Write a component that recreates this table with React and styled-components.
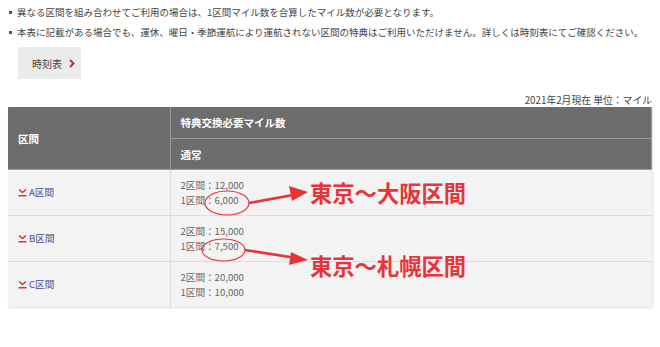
import styled, { createGlobalStyle } from "styled-components";

const GlobalStyle = createGlobalStyle`
  body {
    margin: 0;
    background: #fff;
    font-family: "Noto Sans CJK JP", "Noto Sans", sans-serif;
    color: #444;
  }
`;

const Page = styled.div`
  position: relative;
  width: 660px;
  height: 347px;
  padding: 0 8px;
  box-sizing: border-box;
`;

const Notes = styled.ul`
  list-style: none;
  margin: 2px 0 0;
  padding: 0;
`;

const Note = styled.li`
  position: relative;
  padding-left: 9px;
  font-size: 9.5px;
  line-height: 20px;
  color: #444;
  white-space: nowrap;
  &::before {
    content: "";
    position: absolute;
    left: 1px;
    top: 9px;
    width: 3px;
    height: 3px;
    background: #555;
  }
`;

const TimetableButton = styled.div`
  display: flex;
  align-items: center;
  gap: 7px;
  width: 63px;
  height: 32px;
  box-sizing: border-box;
  margin: 5px 0 0 10px;
  padding-left: 14px;
  background: #ebebeb;
  font-size: 10px;
  color: #444;
  svg {
    display: block;
    margin-top: 1px;
  }
`;

const Stamp = styled.div`
  margin-top: 14px;
  text-align: right;
  font-size: 9.8px;
  line-height: 14px;
  color: #444;
`;

const Table = styled.table`
  width: 644px;
  border-collapse: collapse;
  table-layout: fixed;
  box-shadow: 1px 1px 2px rgba(0, 0, 0, 0.12);
`;

const Head = styled.th`
  background: #6d6d6d;
  color: #fff;
  font-size: 10.5px;
  font-weight: 700;
  text-align: left;
  padding: 0 0 0 10px;
  height: ${(p) => p.$h}px;
  border: 1px solid #9a9a9a;
  border-top: none;
  &:first-child {
    border-left: none;
  }
`;

const Cell = styled.td`
  background: #f3f3f3;
  height: 45px;
  padding: 0 0 0 10px;
  border-top: 1px solid #dcdcdc;
  border-left: ${(p) => (p.$first ? "none" : "1px solid #dcdcdc")};
  font-size: 9.6px;
  line-height: 15px;
  color: #666;
  vertical-align: middle;
`;

const SectionLink = styled.span`
  display: flex;
  align-items: center;
  gap: 2px;
  color: #4a4a8c;
  font-size: 9.6px;
  svg {
    display: block;
  }
`;

const Label = styled.div`
  position: absolute;
  left: 310px;
  top: ${(p) => p.$top}px;
  font-size: 22.3px;
  line-height: 22px;
  font-weight: 700;
  color: #e8333a;
  white-space: nowrap;
  pointer-events: none;
`;

const Overlay = styled.svg`
  position: absolute;
  left: 0;
  top: 0;
  pointer-events: none;
`;

const rows = [
  { name: "A区間", two: "12,000", one: "6,000" },
  { name: "B区間", two: "15,000", one: "7,500" },
  { name: "C区間", two: "20,000", one: "10,000" },
];

function DownMark() {
  return (
    <svg width="9" height="9" viewBox="0 0 9 9">
      <path d="M1 1.5 L4.5 4.5 L8 1.5" fill="none" stroke="#d8323a" strokeWidth="1.6" />
      <rect x="0.5" y="7" width="8" height="1.5" fill="#d8323a" />
    </svg>
  );
}

function RightMark() {
  return (
    <svg width="6" height="9" viewBox="0 0 6 9">
      <path d="M1 1 L4.5 4.5 L1 8" fill="none" stroke="#c8283a" strokeWidth="2" />
    </svg>
  );
}

function App() {
  return (
    <Page>
      <GlobalStyle />
      <Notes>
        <Note>異なる区間を組み合わせてご利用の場合は、1区間マイル数を合算したマイル数が必要となります。</Note>
        <Note>本表に記載がある場合でも、運休、曜日・季節運航により運航されない区間の特典はご利用いただけません。詳しくは時刻表にてご確認ください。</Note>
      </Notes>
      <TimetableButton>
        時刻表
        <RightMark />
      </TimetableButton>
      <Stamp>2021年2月現在 単位：マイル</Stamp>
      <Table>
        <colgroup>
          <col style={{ width: "162px" }} />
          <col />
        </colgroup>
        <thead>
          <tr>
            <Head rowSpan={2} $h={31}>区間</Head>
            <Head $h={31}>特典交換必要マイル数</Head>
          </tr>
          <tr>
            <Head $h={30}>通常</Head>
          </tr>
        </thead>
        <tbody>
          {rows.map((r) => (
            <tr key={r.name}>
              <Cell $first>
                <SectionLink>
                  <DownMark />
                  {r.name}
                </SectionLink>
              </Cell>
              <Cell>
                2区間：{r.two}
                <br />
                1区間：{r.one}
              </Cell>
            </tr>
          ))}
        </tbody>
      </Table>

      <Overlay width="660" height="347">
        <g fill="none" stroke="#e8333a">
          <ellipse cx="227" cy="201" rx="22" ry="12" strokeWidth="1.2" />
          <ellipse cx="223.5" cy="248" rx="21.5" ry="11" strokeWidth="1.2" />
          <path d="M249 201 L293 193" strokeWidth="2.6" />
          <path d="M245 248 L293 255.5" strokeWidth="2.6" />
        </g>
        <g fill="#e8333a">
          <polygon points="308,190 289,184 292,199" />
          <polygon points="308,258 291,250 289,263" />
        </g>
      </Overlay>
      <Label $top={179}>東京〜大阪区間</Label>
      <Label $top={252}>東京〜札幌区間</Label>
    </Page>
  );
}

export default App;
